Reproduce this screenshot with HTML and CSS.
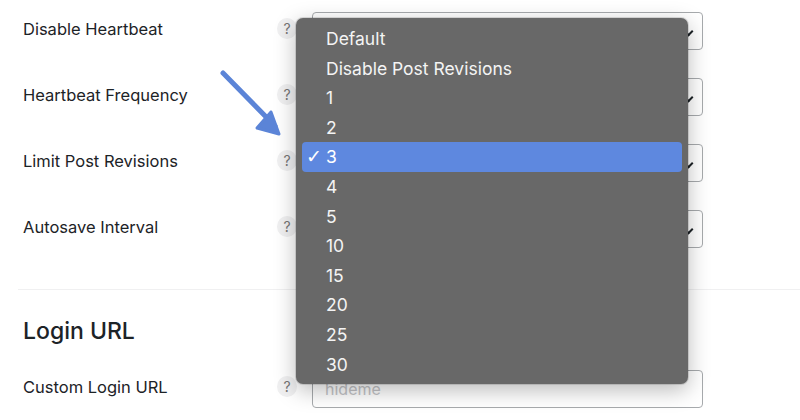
FILE: index.html
```html
<!DOCTYPE html>
<html lang="en">
<head>
  <meta charset="UTF-8" />
  <title>Heartbeat settings</title>
  <link rel="stylesheet" href="styles.css">
</head>
<body>
  <div class="settings">
    <div class="row">
      <div class="label">Disable Heartbeat</div>
      <span class="help">?</span>
      <div class="field select"><span class="chev"></span></div>
    </div>
    <div class="row">
      <div class="label">Heartbeat Frequency</div>
      <span class="help">?</span>
      <div class="field select"><span class="chev"></span></div>
    </div>
    <div class="row">
      <div class="label">Limit Post Revisions</div>
      <span class="help">?</span>
      <div class="field select"><span class="chev"></span></div>
    </div>
    <div class="row">
      <div class="label">Autosave Interval</div>
      <span class="help">?</span>
      <div class="field select"><span class="chev"></span></div>
    </div>

    <hr class="divider">

    <h2 class="section-title">Login URL</h2>
    <div class="row">
      <div class="label">Custom Login URL</div>
      <span class="help">?</span>
      <div class="field input"><span class="placeholder">hideme</span></div>
    </div>

    <ul class="dropdown">
      <li>Default</li>
      <li>Disable Post Revisions</li>
      <li>1</li>
      <li>2</li>
      <li class="active"><span class="check">✓</span>3</li>
      <li>4</li>
      <li>5</li>
      <li>10</li>
      <li>15</li>
      <li>20</li>
      <li>25</li>
      <li>30</li>
    </ul>

    <svg class="arrow" width="80" height="80" viewBox="0 0 80 80">
      <path d="M4 4 L56 57" stroke="#5b84d7" stroke-width="5" stroke-linecap="round" fill="none"/>
      <path d="M38 59 L60 65 L52 43 Z" fill="#5b84d7" stroke="#5b84d7" stroke-width="3" stroke-linejoin="round"/>
    </svg>
  </div>
</body>
</html>
```

FILE: styles.css
```css
* {
  margin: 0;
  padding: 0;
  box-sizing: border-box;
}
body {
  font-family: 'Inter', 'Liberation Sans', sans-serif;
  background: #fff;
  color: #1d2327;
  width: 800px;
  height: 420px;
  overflow: hidden;
}
.settings {
  position: relative;
  padding: 12px 0 0 0;
}
.row {
  display: flex;
  align-items: center;
  height: 38px;
  margin-bottom: 28px;
  padding-left: 23px;
}
.label {
  width: 254px;
  font-size: 16.5px;
  margin-top: -5px;
}
.help {
  width: 20px;
  height: 21px;
  border-radius: 50%;
  background: #f0f0f1;
  color: #757575;
  font-size: 14px;
  display: flex;
  align-items: center;
  justify-content: center;
  margin-top: -6px;
}
.field {
  width: 391px;
  height: 38px;
  margin-left: 15px;
  border: 1px solid #a7aaad;
  border-radius: 4px;
  background: #fff;
  position: relative;
}
.chev {
  position: absolute;
  right: 10px;
  top: 15px;
  width: 7px;
  height: 7px;
  border-right: 2px solid #1d2327;
  border-bottom: 2px solid #1d2327;
  transform: rotate(45deg);
}
.input {
  display: flex;
  align-items: center;
  padding-left: 12px;
}
.placeholder {
  color: #c3c4c7;
  font-size: 16px;
}
.divider {
  border: none;
  border-top: 1px solid #f0f0f1;
  margin: 41px 0 0 18px;
}
.section-title {
  font-size: 23px;
  font-weight: 500;
  padding: 26px 0 24px 23px;
  line-height: 30px;
}
.dropdown {
  position: absolute;
  left: 296px;
  top: 18px;
  width: 392px;
  height: 366px;
  background: #686868;
  border-radius: 7px;
  box-shadow: 0 6px 22px rgba(0, 0, 0, 0.28), 0 0 0 1px rgba(0, 0, 0, 0.12);
  list-style: none;
  padding: 6px 6px 0 6px;
}
.dropdown li {
  height: 29.6px;
  line-height: 29.6px;
  font-size: 17.5px;
  color: #f4f4f4;
  padding-left: 24px;
  border-radius: 4px;
  position: relative;
}
.dropdown li.active {
  background: #5e88df;
  color: #fff;
}
.check {
  position: absolute;
  left: 4px;
  font-size: 19px;
  font-family: 'DejaVu Sans', sans-serif;
}
.arrow {
  position: absolute;
  left: 219px;
  top: 69px;
}
```
